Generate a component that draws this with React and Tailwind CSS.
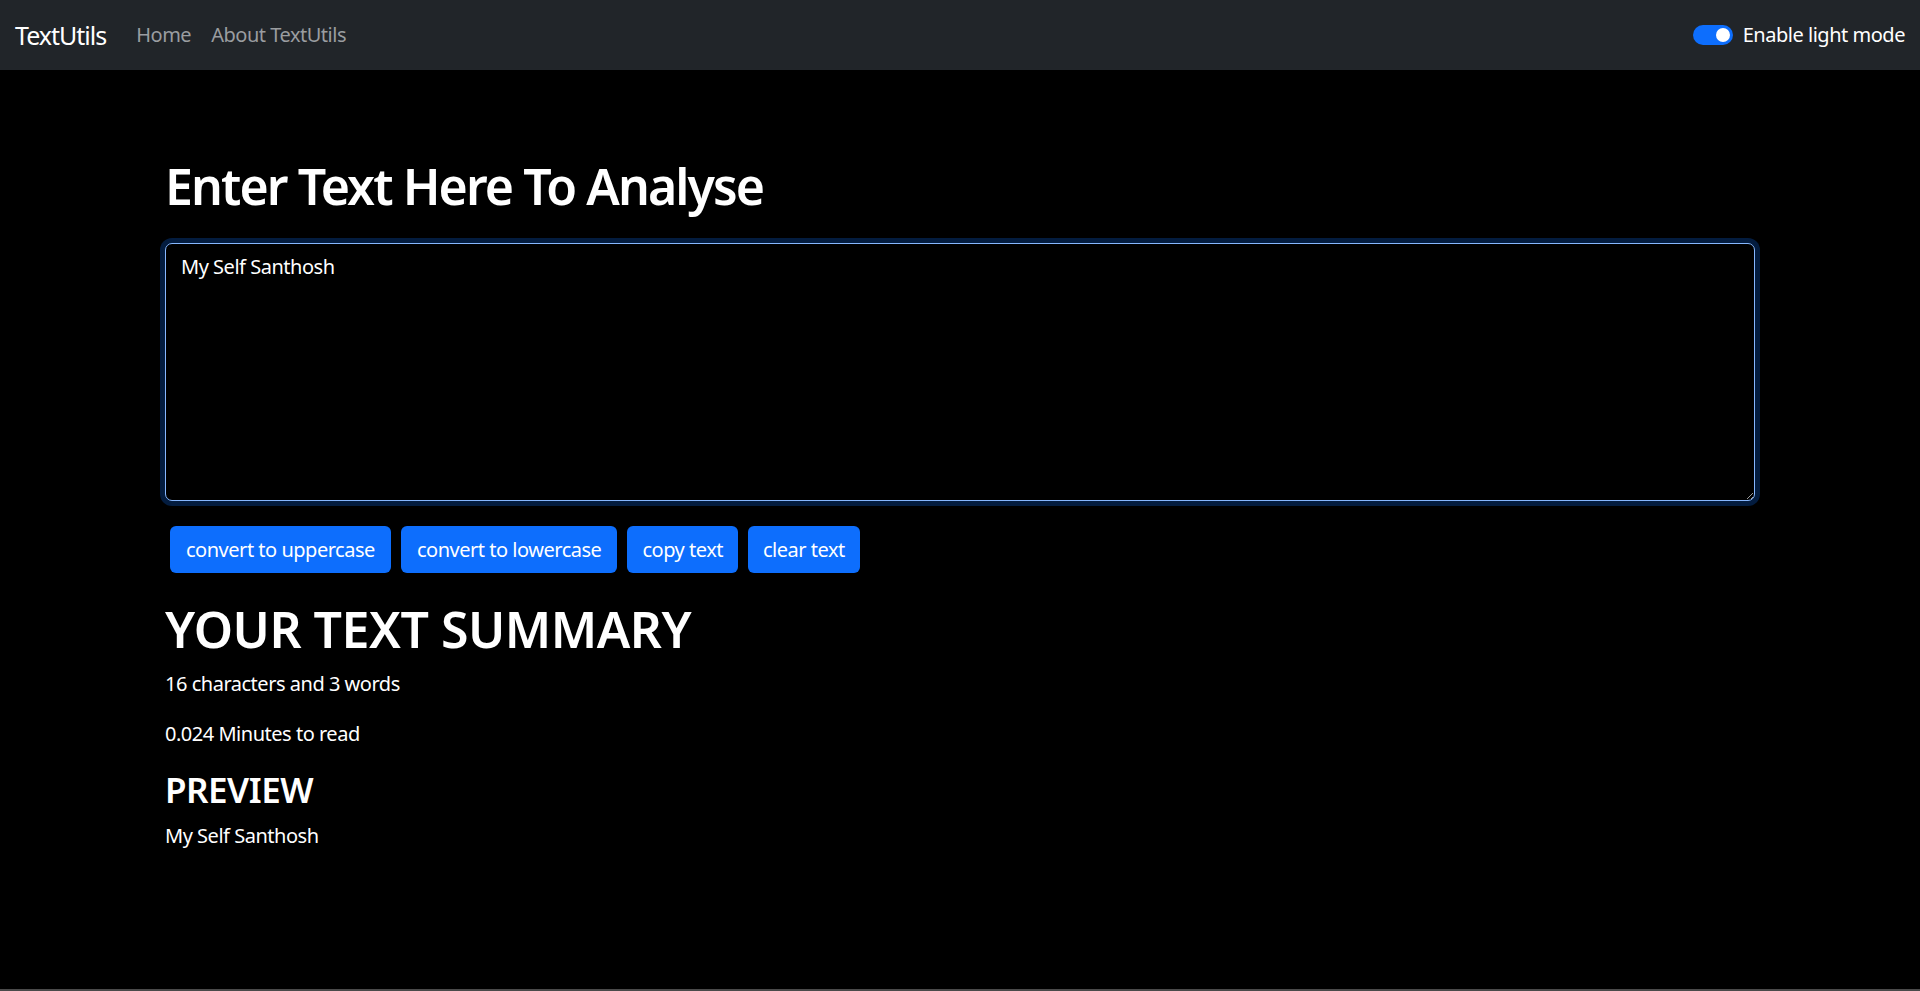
import { useState } from 'react'

export default function App() {
  const [text, setText] = useState('My Self Santhosh')
  const [light, setLight] = useState(true)

  const words = text.split(/\s+/).filter((w) => w.length > 0).length

  return (
    <div className="min-h-[991px] bg-black flex flex-col font-['Noto_Sans',sans-serif] tracking-[-0.03em] text-white">
      {/* navbar */}
      <nav className="h-[70px] bg-[#212529] flex items-center justify-between px-[15px]">
        <div className="flex items-center">
          <a className="text-[25px] tracking-[-0.04em] text-white mr-[20px] leading-none">TextUtils</a>
          <a className="text-[20px] text-[#9a9da0] px-[10px]">Home</a>
          <a className="text-[20px] text-[#9a9da0] px-[10px]">About TextUtils</a>
        </div>
        <label className="flex items-center gap-[10px] text-[20px] text-white">
          <button
            onClick={() => setLight(!light)}
            className="w-[40px] h-[20px] rounded-full bg-[#0d6efd] flex items-center justify-end px-[3px]"
          >
            <span className="w-[14px] h-[14px] rounded-full bg-white" />
          </button>
          Enable light mode
        </label>
      </nav>

      {/* contenido */}
      <div className="flex-1 px-[165px] pt-[86px]">
        <h1 className="text-[50px] font-semibold tracking-[-0.038em] leading-[1.2] mb-[27px]">Enter Text Here To Analyse</h1>
        <textarea
          value={text}
          onChange={(e) => setText(e.target.value)}
          className="block w-full h-[258px] bg-black text-white text-[20px] leading-[1.5] px-[15px] py-[8px] border border-[#86b7fe] rounded-[7px] shadow-[0_0_0_5px_rgba(13,110,253,0.25)] outline-none"
        />
        <div className="flex gap-[10px] mt-[25px] ml-[5px]">
          <button className="bg-[#0d6efd] text-white text-[20px] h-[47px] px-[16px] rounded-[6px]">convert to uppercase</button>
          <button className="bg-[#0d6efd] text-white text-[20px] h-[47px] px-[16px] rounded-[6px]">convert to lowercase</button>
          <button className="bg-[#0d6efd] text-white text-[20px] h-[47px] px-[15px] rounded-[6px]">copy text</button>
          <button className="bg-[#0d6efd] text-white text-[20px] h-[47px] px-[15px] rounded-[6px]">clear text</button>
        </div>

        <h1 className="text-[50px] font-semibold leading-[1.2] mt-[26px] mb-[10px]">YOUR TEXT SUMMARY</h1>
        <p className="text-[20px] leading-[1.5] mb-[20px]">
          {text.length} characters and {words} words
        </p>
        <p className="text-[20px] leading-[1.5] mb-[20px]">{(0.008 * words).toFixed(3)} Minutes to read</p>
        <h3 className="text-[35px] font-semibold leading-[1.2] mb-[10px]">PREVIEW</h3>
        <p className="text-[20px] leading-[1.5]">{text}</p>
      </div>

      <div className="h-[2px] bg-[#4a4a4a]" />
    </div>
  )
}
